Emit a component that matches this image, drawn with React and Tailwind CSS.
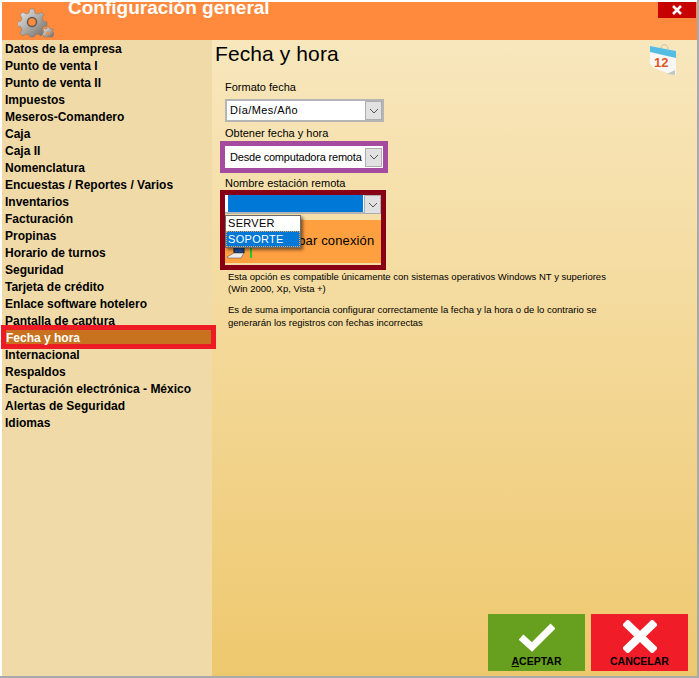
const menuItems = [
  'Datos de la empresa',
  'Punto de venta I',
  'Punto de venta II',
  'Impuestos',
  'Meseros-Comandero',
  'Caja',
  'Caja II',
  'Nomenclatura',
  'Encuestas / Reportes / Varios',
  'Inventarios',
  'Facturación',
  'Propinas',
  'Horario de turnos',
  'Seguridad',
  'Tarjeta de crédito',
  'Enlace software hotelero',
  'Pantalla de captura',
  'Fecha y hora',
  'Internacional',
  'Respaldos',
  'Facturación electrónica - México',
  'Alertas de Seguridad',
  'Idiomas',
];

const GearIcon = () => (
  <svg width="36" height="30" viewBox="0 0 36 30" className="ml-[16px] mt-[6px] shrink-0">
    <defs>
      <linearGradient id="gear" x1="0" y1="0" x2="1" y2="1">
        <stop offset="0" stopColor="#eeeeee" />
        <stop offset="0.55" stopColor="#a8a4a0" />
        <stop offset="1" stopColor="#6d6762" />
      </linearGradient>
    </defs>
    <g fill="url(#gear)" stroke="#7d746c" strokeWidth="0.5">
      <path d="M12 1h4l1 4 3 1 3-2 3 3-2 3 1 3 4 1v4l-4 1-1 3 2 3-3 3-3-2-3 1-1 2h-4l-1-2-3-1-3 2-3-3 2-3-1-3-4-1v-4l4-1 1-3-2-3 3-3 3 2 3-1z" />
      <path d="M29 19h2l.5 1.5 1.5.6 1.3-.7 1 1.4-.8 1.2.4 1.5 1.1.5v2l-1.1.5-.4 1.5H26l-.4-1.5-1.1-.5v-2l1.1-.5.4-1.5-.8-1.2 1-1.4 1.3.7 1.5-.6z" />
    </g>
    <circle cx="14" cy="14" r="4.5" fill="#ff8a3d" stroke="#5f5a55" strokeWidth="1.5" />
    <circle cx="30" cy="25" r="1.6" fill="#ff8a3d" />
  </svg>
);

const CalendarIcon = () => (
  <svg width="28" height="33" viewBox="0 0 28 33" className="block">
    <path d="M11 4c0-4.500 7-4.500 7 1" fill="none" stroke="#c9bda3" strokeWidth="1" />
    <path d="M0 2l26 5v24l-9-2-13-5-4-4z" fill="#f7f7f5" />
    <path d="M0 2l26 5v7L0 8z" fill="#55bde2" />
    <path d="M17 30l8-4v5z" fill="#c4c4c4" />
    <text x="4" y="23" fontSize="13" fontWeight="700" fill="#e2571e" fontFamily="Liberation Sans, sans-serif">12</text>
  </svg>
);

const ComboButton = ({ className = '' }) => (
  <div className={`flex items-center justify-center w-[17px] h-[19px] shrink-0 bg-[#e1e1e1] border border-[#adadad] ${className}`}>
    <svg width="10" height="6" viewBox="0 0 10 6" fill="none" stroke="#555" strokeWidth="1">
      <path d="M1 1l4 4 4-4" />
    </svg>
  </div>
);

const NetworkIcon = () => (
  <svg width="28" height="14" viewBox="0 0 28 14" className="block">
    <path d="M8 0h10v6H8z" fill="#1d4f9c" stroke="#1c1c1c" />
    <path d="M1 10l7-4h10l-3 5H2z" fill="#ececec" stroke="#444" strokeWidth="0.5" />
    <path d="M24 0h2v11h-2z" fill="#26c926" />
  </svg>
);

export default function App() {
  return (
    <div className="w-[699px] h-[678px] flex flex-col bg-white border-r-2 border-b-2 border-r-[#a9a9a9] border-b-[#a9a9a9] pt-[2px] font-['Liberation_Sans',Arial,sans-serif] overflow-hidden text-black">
      {/* Title bar */}
      <div className="h-[38px] ml-[2px] flex shrink-0 bg-[#ff8a3d]">
        <GearIcon />
        <span className="ml-[14px] -mt-[2px] h-[16px] text-[19px] leading-[16px] font-bold text-white whitespace-nowrap">Configuración general</span>
        <div className="ml-auto mr-[1px] w-[38px] h-[16px] bg-[#c70000] flex items-center justify-center">
          <svg width="10" height="10" viewBox="0 0 10 10" fill="none" stroke="#fff" strokeWidth="2.5">
            <path d="M1 1l8 8M9 1l-8 8" />
          </svg>
        </div>
      </div>

      <div className="flex flex-1 min-h-0 ml-[2px]">
        {/* Left menu */}
        <div className="w-[210px] shrink-0 bg-[#f0dba8] pt-[1px] pl-[3px]">
          {menuItems.map((item) => (
            <div key={item} className="relative h-[17px] leading-[17px] text-[12px] font-bold whitespace-nowrap">
              {item === 'Fecha y hora' ? (
                <div className="absolute -top-[5px] -left-[4px] w-[215px] h-[24px] border-[5px] border-[#ed1c24] bg-[#c8711f] text-white leading-[16px]">
                  {item}
                </div>
              ) : (
                item
              )}
            </div>
          ))}
        </div>

        {/* Right panel */}
        <div className="flex-1 bg-gradient-to-b from-[#f8e7bd] to-[#eec86d] pl-[3px] flex flex-col">
          <div className="flex justify-between pr-[19px]">
            <h1 className="text-[21px] leading-[26px] mt-[1px] tracking-[0.1px]">Fecha y hora</h1>
            <div className="mt-[4px]"><CalendarIcon /></div>
          </div>

          <div className="pl-[10px] text-[11px]">
            <div className="mt-[3px] leading-[14px]">Formato fecha</div>
            <div className="mt-[5px] w-[159px] h-[23px] bg-white border-2 border-[#b5b5b5] flex items-center justify-between pl-[3px] pr-[0px]">
              <span className="tracking-[0.4px]">Día/Mes/Año</span>
              <ComboButton />
            </div>

            <div className="mt-[4px] leading-[14px]">Obtener fecha y hora</div>
            <div className="-ml-[5px] mt-[1px] w-[168px] h-[32px] border-[5px] border-[#a44a9f] bg-white flex items-center justify-between pl-[5px] pr-[1px]">
              <span className="whitespace-nowrap tracking-[-0.2px]">Desde computadora remota</span>
              <ComboButton />
            </div>

            <div className="mt-[3px] leading-[14px]">Nombre estación remota</div>
            <div className="-ml-[5px] w-[166px] h-[80px] border-[5px] border-[#880015] relative flex flex-col">
              <div className="h-[19px] flex bg-white border-b-2 border-[#b5b5b5] pl-[3px]">
                <div className="w-[136px] h-[17px] bg-[#0078d7]" />
                <ComboButton className="ml-[1px] h-[17px]" />
              </div>
              <div className="h-[6px]" />
              <div className="h-[43px] bg-[#ffa040]" />
              <div className="flex-1" />

              {/* Button label and icon, partly hidden by the open list */}
              <span className="absolute left-[26px] top-[39px] text-[13px] leading-[14px] tracking-[0.15px] whitespace-nowrap">Comprobar conexión</span>
              <div className="absolute left-[1px] top-[52px]"><NetworkIcon /></div>

              {/* Open dropdown list */}
              <div className="absolute left-0 top-[20px] w-[76px] h-[33px] bg-white border border-[#6b6b6b] shadow-[2px_2px_3px_rgba(0,0,0,0.5)] text-[11px] leading-[16px] tracking-[0.3px]">
                <div className="pl-[2px] h-[15px] leading-[15px]">SERVER</div>
                <div className="pl-[2px] h-[16px] bg-[#0078d7] text-white outline-dotted outline-1 -outline-offset-1 outline-[#f5a050]">SOPORTE</div>
              </div>
            </div>

            <p className="mt-[1px] ml-[3px] text-[9.5px] leading-[12px] w-[385px]">
              Esta opción es compatible únicamente con sistemas operativos Windows NT y superiores (Win 2000, Xp, Vista +)
            </p>
            <p className="mt-[8px] ml-[3px] text-[9.5px] leading-[13px] w-[385px]">
              Es de suma importancia configurar correctamente la fecha y la hora o de lo contrario se generarán los registros con fechas incorrectas
            </p>
          </div>

          {/* Action buttons */}
          <div className="mt-auto mb-[5px] flex justify-end gap-[6px] pr-[9px]">
            <button className="w-[97px] h-[57px] bg-[#67a01e] flex flex-col items-center text-[10.5px] font-bold leading-[12px]">
              <svg width="36" height="30" viewBox="0 0 36 30" fill="none" stroke="#fff" strokeWidth="7" className="mt-[8px] shrink-0">
                <path d="M2 15l11 10L34 4" />
              </svg>
              <span className="mt-[3px]"><span className="underline">A</span>CEPTAR</span>
            </button>
            <button className="w-[97px] h-[57px] bg-[#f01d28] flex flex-col items-center text-[10.5px] font-bold leading-[12px]">
              <svg width="34" height="33" viewBox="0 0 34 33" fill="none" stroke="#fff" strokeWidth="8" className="mt-[6px] shrink-0">
                <path d="M2 2l30 29M32 2L2 31" />
              </svg>
              <span className="mt-[2px]">CANCELAR</span>
            </button>
          </div>
        </div>
      </div>
    </div>
  );
}
